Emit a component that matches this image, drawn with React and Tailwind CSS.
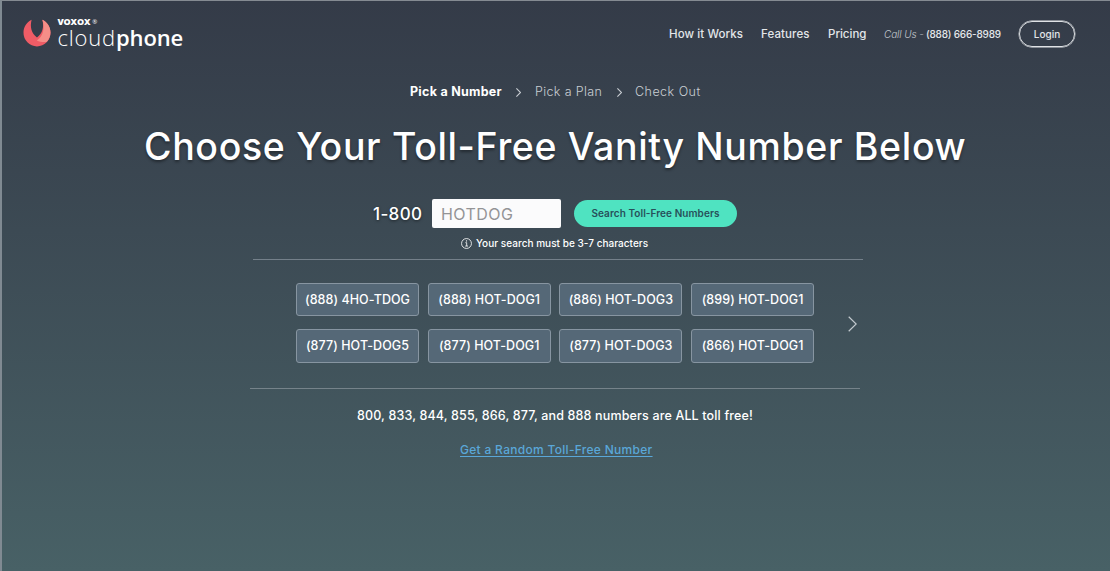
const NUMBERS = [
  "(888) 4HO-TDOG", "(888) HOT-DOG1", "(886) HOT-DOG3", "(899) HOT-DOG1",
  "(877) HOT-DOG5", "(877) HOT-DOG1", "(877) HOT-DOG3", "(866) HOT-DOG1",
];

function Chevron({ className, strokeWidth = 1.2 }) {
  return (
    <svg viewBox="0 0 9 16" className={className} fill="none" stroke="currentColor" strokeWidth={strokeWidth}>
      <path d="M0.7 0.7 L8.2 8 L0.7 15.3" />
    </svg>
  );
}

function Logo() {
  return (
    <div className="flex h-[34px] w-[170px] font-['Open_Sans',sans-serif] text-white">
      <svg viewBox="0 0 28 28" className="mt-[2px] h-[28px] w-[28px]">
        <path d="M8.6 0.8 C3.6 3.2 0.5 8 0.5 13.6 A13.6 13.6 0 0 0 14 27.4 A13.6 13.6 0 0 0 27.5 13.6 C27.5 8 24.4 3.2 19.4 0.8 C21.2 8 19.6 14.6 14 18.4 C8.4 14.6 6.8 8 8.6 0.8 Z" fill="#ef5c66" />
        <path d="M19.4 0.8 C24.4 3.2 27.5 8 27.5 13.6 C27.5 17 26 20.5 23.9 22.7 C20.5 23.2 17 22.8 13.8 21.4 C20.4 17.5 22 9 19.4 0.8 Z" fill="#f58e88" />
      </svg>
      <div className="ml-[7px] flex flex-col whitespace-nowrap">
        <div className="flex h-[10px] text-[9px] leading-[10px] font-extrabold tracking-[-0.15px]">
          VOXOX<span className="ml-[2px] text-[6px] leading-[10px] font-normal">®</span>
        </div>
        <div className="h-[24px] text-[22px] leading-[21px]">
          <span className="font-light tracking-[0.8px]">cloud</span>
          <span className="font-semibold tracking-[-0.1px]">phone</span>
        </div>
      </div>
    </div>
  );
}

export default function App() {
  return (
    <div className="flex h-[571px] w-[1110px] flex-col overflow-hidden border-t border-l-2 border-t-[#858b92] border-l-[#808a92] bg-linear-to-b from-[#343b48] to-[#486166] font-['Inter',sans-serif] font-medium whitespace-nowrap text-white">
      <header className="flex h-[65px] justify-between pr-[35px] pl-[20.5px]">
        <div className="pt-[16px]"><Logo /></div>
        <nav className="flex h-[66px] items-center text-[11.5px] text-[#e3e6e9]">
          <a className="mt-[2px] w-[92px] tracking-[0.1px]">How it Works</a>
          <a className="mt-[2px] w-[67px] tracking-[0.1px]">Features</a>
          <a className="mt-[2px] w-[56px]">Pricing</a>
          <div className="flex w-[135px] text-[10px]">
            <span className="w-[42px] font-light tracking-[-0.1px] text-[#c3c8ce] italic">Call Us -</span>
            <span className="tracking-[-0.2px]">(888) 666-8989</span>
          </div>
          <button className="flex h-[26px] w-[56px] items-center justify-center rounded-full border-[1.5px] border-[#dfe2e5] text-[10px] shadow-[0_0_0_0.4px_#dfe2e5]">Login</button>
        </nav>
      </header>

      <div className="mt-px flex h-[50px] items-center pl-[408px] text-[12.5px] font-light text-[#c9ced3]">
        <span className="w-[106px] text-[12.5px] font-bold tracking-[0.27px] text-white">Pick a Number</span>
        <Chevron className="mr-[14px] h-[9px] w-[5px]" strokeWidth={2} />
        <span className="w-[82px] tracking-[0.36px]">Pick a Plan</span>
        <Chevron className="mr-[13px] h-[9px] w-[5px]" strokeWidth={2} />
        <span className="tracking-[0.47px]">Check Out</span>
      </div>

      <h1 className="flex h-[60px] items-center pl-[142px] text-[37.5px] tracking-[0.65px] [text-shadow:0_2px_3px_rgba(0,0,0,0.4)]">
        Choose Your Toll-Free Vanity Number Below
      </h1>

      <div className="mt-[21px] flex h-[30px] items-center pl-[371px]">
        <span className="mt-[3px] w-[59px] text-[17px] tracking-[0.35px] [text-shadow:0_1px_3px_rgba(0,0,0,0.5)]">1-800</span>
        <div className="flex h-[29px] w-[129px] items-center rounded-[2px] bg-[#fbfbfc] pt-px pl-[9px] text-[16px] font-normal tracking-[0.45px] text-[#949496]">HOTDOG</div>
        <button className="ml-[13px] flex h-[27px] w-[163px] items-center justify-center rounded-full bg-[#4fe3c1] text-[10px] font-semibold tracking-[0.07px] text-[#27505a]">
          Search Toll-Free Numbers
        </button>
      </div>

      <div className="flex h-[31px] items-center pb-px pl-[459px] text-[10px]">
        <svg viewBox="0 0 12 12" className="mr-[4px] h-[11px] w-[11px]" fill="none" stroke="currentColor">
          <circle cx="6" cy="6" r="5.4" strokeWidth="0.9" />
          <path d="M4.8 5.1 H6.2 V8.7 M4.6 8.8 H7.7" strokeWidth="0.9" />
          <circle cx="6" cy="3.2" r="0.7" fill="currentColor" stroke="none" />
        </svg>
        <span className="tracking-[0.03px]">Your search must be 3-7 characters</span>
      </div>

      <div className="ml-[251px] h-px w-[610px] bg-[#74808a]" />

      <div className="flex h-[128px] items-center pl-[294px]">
        <div className="mb-[3px] grid grid-cols-[repeat(4,123px)] gap-x-[8.7px] gap-y-[13px]">
          {NUMBERS.map((n) => (
            <button key={n} className="flex h-[33.5px] items-center justify-center rounded-[3px] border border-[#8795a1] bg-[#556877] pt-[2px] text-[12.5px] tracking-[0.06px]">
              {n}
            </button>
          ))}
        </div>
        <Chevron className="ml-[34px] h-[16px] w-[9px] text-[#c3cacf]" />
      </div>

      <div className="ml-[248px] h-px w-[610px] bg-[#76838a]" />

      <p className="mt-[17px] h-[20px] pl-[355px] text-[12.5px] leading-[20px] tracking-[0.15px]">
        800, 833, 844, 855, 866, 877, and 888 numbers are ALL toll free!
      </p>
      <a className="mt-[14px] h-[20px] pl-[458px] text-[12px] leading-[20px] tracking-[0.3px] text-[#5aa7d8] underline underline-offset-2">
        Get a Random Toll-Free Number
      </a>
    </div>
  );
}
